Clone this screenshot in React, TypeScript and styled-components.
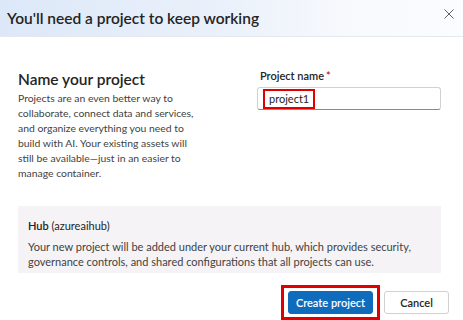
import React from "react";
import styled, { createGlobalStyle } from "styled-components";

const Global = createGlobalStyle`
  html, body { margin: 0; padding: 0; background: #ffffff; }
  body { font-family: "Segoe UI", Lato, "Noto Sans", sans-serif; color: #242424; }
  * { box-sizing: border-box; }
`;

const Dialog = styled.div`
  width: 463px;
  height: 320px;
  display: flex;
  flex-direction: column;
  background: #fff;
  overflow: hidden;
`;

const Header = styled.div`
  height: 37px;
  display: flex;
  align-items: center;
  justify-content: space-between;
  padding: 0 8px 0 7px;
  background: linear-gradient(90deg, #dce8f8 0%, #e9f0fa 45%, #f7f9fd 75%, #fbfcfe 100%);
  border-bottom: 1px solid #e6e9ee;
`;

const Title = styled.h1`
  margin: 0;
  font-size: 15.5px;
  font-weight: 600;
  color: #242424;
`;

const Close = styled.button`
  border: none;
  background: transparent;
  padding: 0;
  width: 12px;
  height: 12px;
  display: flex;
  align-items: center;
  justify-content: center;
  margin-top: -8px;
`;

const Body = styled.div`
  display: flex;
  flex-direction: column;
  padding: 31px 22px 0 18px;
`;

const Top = styled.div`
  display: grid;
  grid-template-columns: 1fr 184px;
  column-gap: 20px;
`;

const Intro = styled.div`
  display: flex;
  flex-direction: column;
`;

const Heading = styled.h2`
  margin: 0 0 1px 0;
  font-size: 15.5px;
  font-weight: 600;
  color: #242424;
  line-height: 22px;
`;

const Para = styled.p`
  margin: 0;
  font-size: 10.4px;
  line-height: 15px;
  color: #424242;
  width: 184px;
`;

const Field = styled.div`
  display: flex;
  flex-direction: column;
  padding-top: 1px;
`;

const Label = styled.label`
  font-size: 11px;
  font-weight: 600;
  color: #242424;
  padding-left: 3px;
  line-height: 14px;
  margin-bottom: 4px;
  span { color: #c50f1f; margin-left: 2px; }
`;

const InputBox = styled.div`
  height: 23px;
  border: 1px solid #d1d1d1;
  border-bottom-color: #8a8a8a;
  border-radius: 3px;
  display: flex;
  align-items: center;
  padding-left: 5px;
`;

const Highlight = styled.div`
  border: 2px solid #e00000;
  height: 20px;
  padding: 0 4px;
  display: flex;
  align-items: center;
  font-size: 11px;
  color: #242424;
`;

const HubBox = styled.div`
  margin-top: 25px;
  background: #f5f3f5;
  padding: 12px 10px 10px 10px;
  height: 67px;
`;

const HubTitle = styled.div`
  font-size: 11px;
  line-height: 15px;
  color: #242424;
  margin-bottom: 6px;
  b { font-weight: 600; }
`;

const HubText = styled.div`
  font-size: 11px;
  line-height: 15px;
  color: #424242;
`;

const Footer = styled.div`
  display: flex;
  justify-content: flex-end;
  align-items: center;
  gap: 4px;
  padding: 12px 14px 0 0;
`;

const Outline = styled.div`
  border: 3px solid #e00000;
  padding: 3px 4px 3px 4px;
  display: flex;
`;

const Btn = styled.button<{ $primary?: boolean }>`
  height: 23px;
  padding: 0;
  width: ${(p) => (p.$primary ? "85px" : "65px")};
  border-radius: 3px;
  font-family: inherit;
  font-size: 11px;
  font-weight: 600;
  border: 1px solid ${(p) => (p.$primary ? "#0f6cbd" : "#d1d1d1")};
  background: ${(p) => (p.$primary ? "#0f6cbd" : "#ffffff")};
  color: ${(p) => (p.$primary ? "#ffffff" : "#242424")};
`;

export default function App() {
  return (
    <>
      <Global />
      <Dialog>
        <Header>
          <Title>You'll need a project to keep working</Title>
          <Close aria-label="Close">
            <svg width="10" height="10" viewBox="0 0 10 10">
              <path d="M0.5 0.5 L9.5 9.5 M9.5 0.5 L0.5 9.5" stroke="#616161" strokeWidth="1" />
            </svg>
          </Close>
        </Header>
        <Body>
          <Top>
            <Intro>
              <Heading>Name your project</Heading>
              <Para>
                Projects are an even better way to collaborate, connect data and services, and organize
                everything you need to build with AI. Your existing assets will still be available—just in
                an easier to manage container.
              </Para>
            </Intro>
            <Field>
              <Label>
                Project name<span>*</span>
              </Label>
              <InputBox>
                <Highlight>project1</Highlight>
              </InputBox>
            </Field>
          </Top>
          <HubBox>
            <HubTitle>
              <b>Hub</b> (azureaihub)
            </HubTitle>
            <HubText>
              Your new project will be added under your current hub, which provides security, governance
              controls, and shared configurations that all projects can use.
            </HubText>
          </HubBox>
        </Body>
        <Footer>
          <Outline>
            <Btn $primary>Create project</Btn>
          </Outline>
          <Btn>Cancel</Btn>
        </Footer>
      </Dialog>
    </>
  );
}
